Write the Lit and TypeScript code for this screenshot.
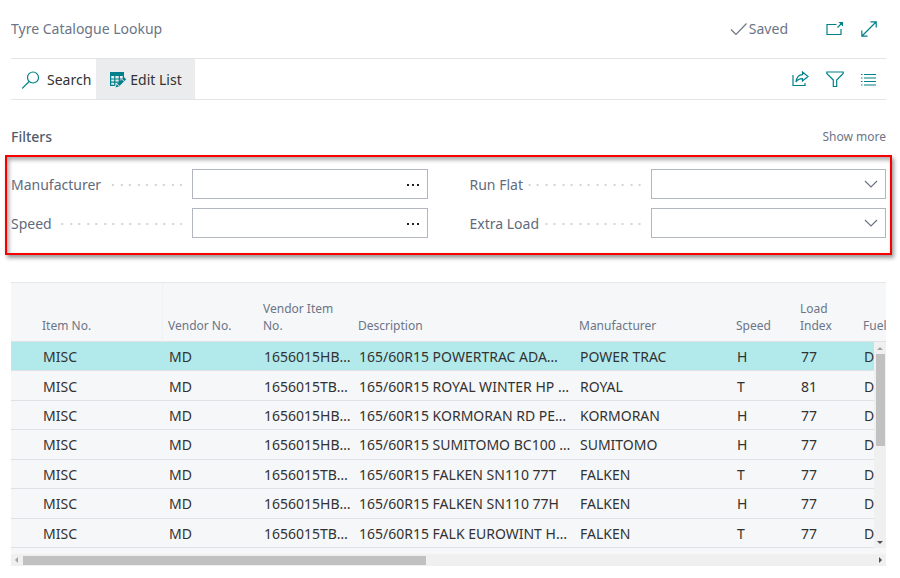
import { LitElement, html, css, svg } from "lit";
import { customElement, property } from "lit/decorators.js";
import { classMap } from "lit/directives/class-map.js";

interface Tyre {
  item: string;
  vendor: string;
  vendorItem: string;
  description: string;
  manufacturer: string;
  speed: string;
  load: string;
  fuel: string;
}

const tyre = (vendorItem: string, description: string, manufacturer: string, speed: string, load = "77"): Tyre => ({
  item: "MISC",
  vendor: "MD",
  vendorItem,
  description,
  manufacturer,
  speed,
  load,
  fuel: "D",
});

const TYRES: Tyre[] = [
  tyre("1656015HB…", "165/60R15 POWERTRAC ADA…", "POWER TRAC", "H"),
  tyre("1656015TB…", "165/60R15 ROYAL WINTER HP …", "ROYAL", "T", "81"),
  tyre("1656015HB…", "165/60R15 KORMORAN RD PE…", "KORMORAN", "H"),
  tyre("1656015HB…", "165/60R15 SUMITOMO BC100 …", "SUMITOMO", "H"),
  tyre("1656015TB…", "165/60R15 FALKEN SN110 77T", "FALKEN", "T"),
  tyre("1656015HB…", "165/60R15 FALKEN SN110 77H", "FALKEN", "H"),
  tyre("1656015TB…", "165/60R15 FALK EUROWINT H…", "FALKEN", "T"),
];

const COLUMNS: { key: keyof Tyre; label: string }[] = [
  { key: "item", label: "Item No." },
  { key: "vendor", label: "Vendor No." },
  { key: "vendorItem", label: "Vendor Item No." },
  { key: "description", label: "Description" },
  { key: "manufacturer", label: "Manufacturer" },
  { key: "speed", label: "Speed" },
  { key: "load", label: "Load Index" },
  { key: "fuel", label: "Fuel" },
];

const GLYPHS = {
  search: svg`<circle cx="11" cy="6.500" r="5.500"/><path d="M7.200 10.500 0 17.500"/>`,
  edit: svg`
    <path class="solid" d="M1 1h14v4H1z"/>
    <path d="M1.600 4v10.400h4M1.600 8h11M1.600 11.200h8M5.800 5v9.400M10.300 5v6M14.400 4v3"/>
    <path class="solid" d="m14.800 5.900 2.400 2.300-7 7-3.700 1.300 1.300-3.600z"/>
    <path class="gap" d="m12.600 7.900 2.500 2.500M8 12.800l2.300 2.300"/>`,
  check: svg`<path d="m1 9.500 5 5L16.500 3.500"/>`,
  popout: svg`<path d="M10.500 4.500H1v10h14V9M11.500 7.500l4-4"/><path class="solid" d="M12.500 2H17v4.500z"/>`,
  expand: svg`<path d="M2 16 16 2M10.500 1.800h5.700v5.700M1.800 10.500v5.700h5.700"/>`,
  share: svg`<path d="M1 5v10.500h12V13"/><path d="M10.500 2l5.500 4.500-5.500 4.500V8.700C7.500 8.700 5.500 9.500 4 12 4.500 7.500 6.500 4.800 10.500 4.600z"/>`,
  filter: svg`<path d="M.8 2h16.400v1.500l-6.500 6.500v6.500H7.300V10L.8 3.500z"/>`,
  list: svg`<path d="M4 4.500h12M4 8h12M4 11.500h12M4 15h12M1 4.500h1.500M1 8h1.500M1 11.500h1.500M1 15h1.500"/>`,
  chevron: svg`<path d="m3 6 6 6 6-6"/>`,
  dots: svg`<path class="solid" d="M3 9h2v2H3zM8 9h2v2H8zM13 9h2v2h-2z"/>`,
};

@customElement("bc-icon")
class BcIcon extends LitElement {
  @property() name: keyof typeof GLYPHS = "search";

  static styles = css`
    :host { display: block; flex: none; width: 18px; height: 18px; }
    svg { display: block; width: 100%; height: 100%; fill: none; stroke: currentColor; stroke-width: 1.2; }
    .solid { fill: currentColor; stroke: none; }
    .gap { stroke: #eaecee; stroke-width: 1; }
  `;

  render() {
    return html`<svg viewBox="0 0 18 18" aria-hidden="true">${GLYPHS[this.name]}</svg>`;
  }
}

@customElement("filter-field")
class FilterField extends LitElement {
  @property() label = "";
  @property() kind: "lookup" | "select" = "lookup";

  static styles = css`
    * { box-sizing: border-box; }
    .field { display: flex; align-items: center; }
    .caption { display: flex; align-items: center; gap: 5px; width: 181px; padding: 2px 10px 0 0; }
    label { flex: none; }
    .leader {
      flex: 1;
      height: 2px;
      background:
        linear-gradient(to left, #d2d4d7 2px, transparent 2px) right 0 top 0 / 17px 2px,
        linear-gradient(to left, #d2d4d7 2px, transparent 2px) right 8px top 0 / 17px 2px;
    }
    .box { position: relative; display: flex; flex: 1; min-width: 0; }
    input, select {
      width: 100%;
      height: 30px;
      padding: 0 32px 0 8px;
      border: 1px solid #b1b6c0;
      border-radius: 0;
      background: #fff;
      color: #212121;
      font: inherit;
      appearance: none;
    }
    .assist {
      position: absolute;
      inset: 0 6px 0 auto;
      display: flex;
      align-items: center;
      padding: 0;
      border: 0;
      background: none;
      color: #212121;
    }
    .arrow { color: #6b7280; pointer-events: none; }
  `;

  render() {
    return html`<div class="field">
      <div class="caption"><label for="value">${this.label}</label><span class="leader"></span></div>
      <div class="box">
        ${this.kind === "select"
          ? html`<select id="value"><option></option></select>
              <span class="assist arrow"><bc-icon name="chevron"></bc-icon></span>`
          : html`<input id="value" type="text" />
              <button class="assist" aria-label="Look up"><bc-icon name="dots"></bc-icon></button>`}
      </div>
    </div>`;
  }
}

@customElement("app-root")
class AppRoot extends LitElement {
  static styles = css`
    * { box-sizing: border-box; }
    :host {
      display: block;
      padding: 0 14px 12px 11px;
      background: #fff;
      color: #5f6b7c;
      font: 14px/20px "Noto Sans", "Open Sans", sans-serif;
    }
    button { font: inherit; border: 0; padding: 0; background: none; color: inherit; }
    h1, h2 { margin: 0; font: inherit; }
    header { display: flex; align-items: center; height: 58px; }
    h1 { flex: 1; color: #6b7587; }
    .saved { display: flex; align-items: center; gap: 1px; margin-right: 38px; color: #6b7587; }
    .icons { display: flex; gap: 16px; padding-right: 8px; color: #00808a; }
    .toolbar {
      display: flex;
      align-items: stretch;
      height: 42px;
      border: solid #e3e4e6;
      border-width: 1px 0;
    }
    .action { display: flex; align-items: center; gap: 7px; padding: 2px 5px 0 11px; color: #323232; }
    .action bc-icon { color: #00808a; }
    .action.active { gap: 3px; padding: 2px 13px 0; background: #eaecee; }
    .toolbar .icons { align-items: center; margin-left: auto; }
    .section { display: flex; justify-content: space-between; align-items: center; height: 55px; padding-top: 19px; }
    h2 { color: #505c6d; font-weight: 500; }
    .more { color: #6b7587; font-size: 12px; text-decoration: none; }
    .filters {
      display: grid;
      grid-template-columns: 1fr 1fr;
      gap: 9px 42px;
      margin: 0 -6px 27px -6px;
      padding: 12px 4px 15px 4px;
      border: 2px solid #f80000;
      box-shadow: 2px 3px 4px #0006, inset 2px 3px 4px #0005;
    }
    .list { position: relative; overflow: hidden; border-top: 1px solid #e5e7ea; background: #f6f7f9; }
    table { width: 100%; height: 265px; table-layout: fixed; border-collapse: separate; border-spacing: 0; }
    th, td { padding: 2px 0 0 6px; text-align: left; white-space: nowrap; overflow: hidden; border-bottom: 1px solid #dfe1e4; }
    th {
      height: 59px;
      padding: 0 0 7px 5px;
      color: #6b7587;
      font-size: 12px;
      font-weight: 400;
      line-height: 17px;
      white-space: normal;
      vertical-align: bottom;
    }
    td { color: #323232; }
    .selected td { background: #b2eaec; }
    .gutter { width: 26px; }
    .item { width: 126px; }
    th.item { border-right: 1px solid #eff1f2; }
    .vendor, .vendorItem { width: 95px; }
    .description { width: 221px; }
    .manufacturer { width: 157px; }
    .speed { width: 64px; }
    .load { width: 63px; padding-right: 16px; }
    .track { display: flex; background: #f0f0f0; }
    .thumb { background: #c1c1c1; }
    .vertical {
      position: absolute;
      inset: 59px 0 6px auto;
      flex-direction: column;
      align-items: center;
      width: 12px;
    }
    .vertical .thumb { width: 9px; height: 92px; margin-bottom: auto; }
    .horizontal { align-items: center; height: 12px; }
    .horizontal .thumb { width: 46%; height: 9px; margin-right: auto; }
    .arrow { display: block; width: 12px; height: 12px; fill: #505050; }
    .arrow.off { fill: #a3a3a3; }
    .foot { height: 6px; }
  `;

  render() {
    return html`
      <header>
        <h1>Tyre Catalogue Lookup</h1>
        <span class="saved"><bc-icon name="check"></bc-icon>Saved</span>
        <div class="icons">
          <button aria-label="Open in new window"><bc-icon name="popout"></bc-icon></button>
          <button aria-label="Expand"><bc-icon name="expand"></bc-icon></button>
        </div>
      </header>
      <div class="toolbar">
        <button class="action"><bc-icon name="search"></bc-icon>Search</button>
        <button class="action active"><bc-icon name="edit"></bc-icon>Edit List</button>
        <div class="icons">
          <button aria-label="Share"><bc-icon name="share"></bc-icon></button>
          <button aria-label="Filter"><bc-icon name="filter"></bc-icon></button>
          <button aria-label="List view"><bc-icon name="list"></bc-icon></button>
        </div>
      </div>
      <div class="section">
        <h2>Filters</h2>
        <a class="more" href="#">Show more</a>
      </div>
      <div class="filters">
        <filter-field label="Manufacturer"></filter-field>
        <filter-field label="Run Flat" kind="select"></filter-field>
        <filter-field label="Speed"></filter-field>
        <filter-field label="Extra Load" kind="select"></filter-field>
      </div>
      <div class="list">
        <table>
          <thead>
            <tr>
              <th class="gutter"></th>
              ${COLUMNS.map((c) => html`<th class=${c.key}>${c.label}</th>`)}
            </tr>
          </thead>
          <tbody>
            ${TYRES.map(
              (t, i) => html`<tr class=${classMap({ selected: i === 0 })}>
                <td></td>
                ${COLUMNS.map((c) => html`<td>${t[c.key]}</td>`)}
              </tr>`
            )}
          </tbody>
        </table>
        <div class="foot"></div>
        <div class="track vertical">
          <svg class="arrow off" viewBox="0 0 12 12"><path d="m3 8 3-3 3 3z" /></svg>
          <div class="thumb"></div>
          <svg class="arrow" viewBox="0 0 12 12"><path d="m3 5 3 3 3-3z" /></svg>
        </div>
      </div>
      <div class="track horizontal">
        <svg class="arrow off" viewBox="0 0 12 12"><path d="M7 3 4 6l3 3z" /></svg>
        <div class="thumb"></div>
        <svg class="arrow" viewBox="0 0 12 12"><path d="m5 3 3 3-3 3z" /></svg>
      </div>
    `;
  }
}
